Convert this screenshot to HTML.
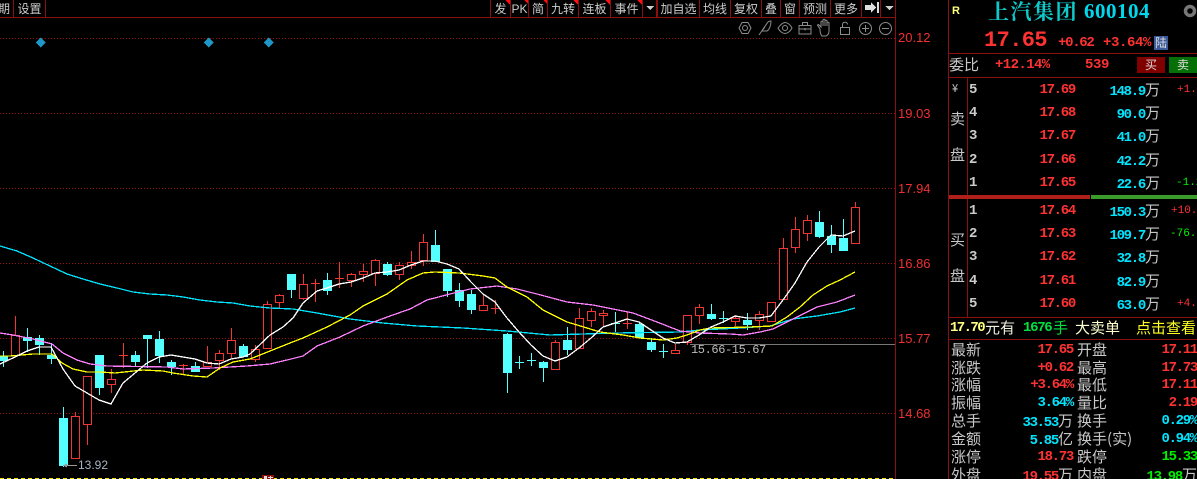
<!DOCTYPE html>
<html><head><meta charset="utf-8"><style>
html,body{margin:0;padding:0;background:#000;width:1197px;height:479px;overflow:hidden}
#r{position:relative;width:1197px;height:479px;overflow:hidden;background:#000;font-family:"Liberation Sans","WenQuanYi Zen Hei","Noto Sans CJK SC",sans-serif}
#r svg{position:absolute;left:0;top:0}
.t{position:absolute;white-space:nowrap;line-height:16px;height:16px}
.b{position:absolute;background:#8a0f0f}
.tb{font-size:12px;color:#ccc;top:1px;font-family:"WenQuanYi Zen Hei","Noto Sans CJK SC",sans-serif;text-align:center}
.p{font-size:13px;color:#f03030;left:898px}
.n{font-family:"Liberation Mono",monospace;font-weight:bold;font-size:14px;letter-spacing:-1.3px;text-align:right}
.rd{color:#ff3232}.cy{color:#00e5ff}.gr{color:#00f000}
.l{font-family:"WenQuanYi Zen Hei","Noto Sans CJK SC",sans-serif;font-size:15px;color:#c8c8c8}
.pr{right:122px}.v1{right:124px}.v2{right:0}
.d{font-family:"Liberation Mono",monospace;font-size:11px}
.wn{letter-spacing:0;font-weight:normal}
</style></head><body><div id="r">
<svg width="1197" height="479" viewBox="0 0 1197 479">
<g shape-rendering="crispEdges">
<path d="M0 38.5H895M0 113.5H895M0 188.5H895M0 263.5H895M0 338.5H895M0 413.5H895" stroke="#9a1010" stroke-dasharray="1 2" fill="none"/>
<path d="M690 344.5H895" stroke="#777" fill="none"/>
<path d="M0 478.5H895" stroke="#f0e000" stroke-dasharray="4 3" fill="none"/>
<path d="M3.5 351V367M27.5 328V352M39.5 335V355M51.5 343V364M63.5 407V467M99.5 355V395M135.5 351V366M147.5 335V368M159.5 331V363M171.5 360V375M195.5 362V372M243.5 344V357M291.5 274V298M327.5 273V295M387.5 262V276M435.5 230V262M447.5 269V297M459.5 283V307M471.5 290V314M507.5 333V393M519.5 356V369M531.5 353V366M543.5 361V382M567.5 327V355M615.5 312V332M639.5 322V338M651.5 338V352M663.5 344V358M711.5 304V320M723.5 311V323M747.5 313V330M819.5 211V238M831.5 225V253M843.5 219V250M515 362.5H524M527 360.5H536M611 323.5H620M659 351.5H668M719 318.5H728" stroke="#54ffff" fill="none"/>
<path d="M-1 356h9v5h-9zM23 337h9v4h-9zM35 338h9v7h-9zM47 355h9v4h-9zM59 418h9v48h-9zM95 355h9v33h-9zM131 355h9v7h-9zM143 335h9v4h-9zM155 339h9v17h-9zM167 362h9v5h-9zM191 366h9v6h-9zM239 346h9v11h-9zM287 274h9v16h-9zM323 280h9v11h-9zM383 264h9v11h-9zM431 245h9v17h-9zM443 269h9v22h-9zM455 290h9v11h-9zM467 294h9v16h-9zM503 334h9v39h-9zM539 362h9v6h-9zM563 340h9v10h-9zM635 324h9v14h-9zM647 342h9v8h-9zM707 314h9v5h-9zM743 320h9v5h-9zM815 222h9v15h-9zM827 236h9v9h-9zM839 238h9v13h-9z" fill="#54ffff"/>
<path d="M15.5 316V355M75.5 412V458M87.5 376V445M111.5 369V393M123.5 343V368M183.5 364V375M207.5 346V367M219.5 350V370M231.5 328V358M255.5 345V362M267.5 301V349M279.5 294V308M303.5 274V300M315.5 279V302M339.5 262V288M351.5 273V287M363.5 264V282M375.5 259V286M399.5 262V280M411.5 251V269M423.5 234V266M483.5 295V310M495.5 300V314M555.5 340V369M579.5 308V348M591.5 308V327M603.5 310V327M627.5 312V329M675.5 344V354M687.5 315V345M699.5 304V324M735.5 315V326M759.5 311V330M771.5 302V321M783.5 238V300M795.5 217V253M807.5 215V241M855.5 202V243M119 355.5H128M179 365.5H188M311 283.5H320M335 278.5H344M491 308.5H500M623 323.5H632" stroke="#f03535" fill="none"/>
<path d="M11.5 335.5h8v20h-8zM71.5 416.5h8v42h-8zM83.5 376.5h8v48h-8zM107.5 379.5h8v5h-8zM203.5 362.5h8v4h-8zM215.5 353.5h8v7h-8zM227.5 340.5h8v13h-8zM251.5 349.5h8v10h-8zM263.5 304.5h8v44h-8zM275.5 295.5h8v7h-8zM299.5 284.5h8v14h-8zM347.5 274.5h8v6h-8zM359.5 271.5h8v3h-8zM371.5 260.5h8v13h-8zM395.5 265.5h8v9h-8zM407.5 262.5h8v3h-8zM419.5 242.5h8v18h-8zM479.5 305.5h8v5h-8zM551.5 342.5h8v27h-8zM575.5 318.5h8v30h-8zM587.5 311.5h8v9h-8zM599.5 313.5h8v2h-8zM671.5 350.5h8v3h-8zM683.5 315.5h8v27h-8zM695.5 307.5h8v8h-8zM731.5 318.5h8v3h-8zM755.5 314.5h8v6h-8zM767.5 302.5h8v19h-8zM779.5 248.5h8v51h-8zM791.5 229.5h8v18h-8zM803.5 220.5h8v13h-8zM851.5 207.5h8v36h-8z" fill="#000" stroke="#f03535"/>
<polyline fill="none" stroke="#00e5ff" stroke-width="1.3" points="0,246 10,249 17,251 33,258 50,266 67,274 83,279 100,284 117,288 133,292 150,294 167,295 183,297 200,300 217,302 233,303 250,306 270,308 293,309 317,313 350,319 383,323 417,326 463,328 507,331 550,335 583,334 617,333 680,332 700,330 740,328 770,326 793,319 817,316 840,312 855,308"/>
<polyline fill="none" stroke="#ff80ff" stroke-width="1.3" points="0,333 13,335 33,339 52,344 63,353 77,360 90,364 107,366 167,367 183,369 213,368 247,366 270,364 287,360 303,356 317,346 340,337 363,326 390,316 410,309 427,300 450,294 470,289 497,286 517,289 537,294 567,302 593,305 633,313 657,322 680,331 700,333 730,334 743,335 760,332 773,329 797,317 817,307 837,302 855,295"/>
<polyline fill="none" stroke="#ffff00" stroke-width="1.3" points="0,356 10,356 33,354 52,354 62,363 73,369 87,372 100,372 115,373 143,370 163,371 173,373 193,376 207,377 220,368 233,362 250,359 270,351 290,343 303,338 327,327 350,315 363,306 387,294 407,280 423,273 435,272 459,273 483,276 495,278 507,287 527,297 543,310 567,322 587,328 600,332 623,335 640,338 663,340 677,338 687,335 700,330 710,328 750,327 772,326 787,317 800,307 813,295 827,286 840,280 855,272"/>
<polyline fill="none" stroke="#ffffff" stroke-width="1.3" points="0,364 15,357 27,351 39,347 51,347 63,369 75,386 87,393 99,400 111,404 123,383 135,373 147,363 159,357 171,355 183,357 195,359 207,363 219,364 231,359 243,357 250,354 270,335 283,327 293,318 303,303 317,291 327,288 339,284 351,282 363,278 375,273 387,272 399,270 411,265 423,261 435,261 447,264 459,269 471,282 483,294 495,302 507,318 519,332 531,345 543,356 555,361 567,357 579,348 591,338 603,327 615,323 627,319 639,322 651,330 663,338 675,343 687,342 699,335 711,327 723,322 735,316 747,318 759,318 771,316 783,300 795,283 807,262 819,247 831,235 843,236 855,231"/>
<path d="M40.5 37.5l5 5-5 5-5-5zM208.5 37.5l5 5-5 5-5-5zM268.5 37.5l5 5-5 5-5-5z" fill="#1e96c8"/>
<path d="M262 475h12v4h-12z" fill="#8a0f0f"/>
<path d="M264 476h3v3h-3zM270 476h1v3h-1zM268 477h5v1h-5z" fill="#ddd"/>
</g>
<g fill="none" stroke="#8c8c8c" stroke-width="1">
<path d="M742 22.500l6 0 3 5.500-3 5.500-6 0-3-5.500z" stroke-linejoin="round"/><circle cx="745" cy="28" r="2.500"/>
<path d="M759 35l9-13c1-1 2-1 3-1 0 5-2 9-4 10l-5 0M762 31l3-4" />
<path d="M778 28c3-4 5-5.500 7-5.500s5 1.500 7 5.500c-2 4-5 5.500-7 5.500s-5-1.500-7-5.500z"/><circle cx="785" cy="28" r="2.500"/>
<path d="M799 25.500h12v8.500h-12zM802.500 25.500v-3h5v3M799 29h12M805 28v2.500"/>
<path d="M820 29l-2-3c-1-1 0-2 1-1l2 2v-5c0-1 2-1 2 0v4-6c0-1 2-1 2 0v6-5c0-1 2-1 2 0v5-3c0-1 2-1 2 0v8c0 2-1 4-3 5h-4c-1-1-2-3-2-7z"/>
<path d="M840.500 27.500h9v7h-9zM842.500 27.500v-3c0-3 5-3 5 0"/>
<circle cx="865.500" cy="28.500" r="6"/><path d="M862 28.500h7M865.500 25v7"/>
<circle cx="885.500" cy="28.500" r="6"/><path d="M882 28.500h7"/>
</g>
</svg>

<div class="b" style="left:0;top:17px;width:895px;height:1px"></div>
<div class="b" style="left:13px;top:0;width:1px;height:17px"></div>
<div class="b" style="left:45px;top:0;width:1px;height:17px"></div>
<div class="b" style="left:490px;top:0;width:1px;height:17px"></div>
<div class="b" style="left:510px;top:0;width:1px;height:17px"></div>
<div class="b" style="left:528px;top:0;width:1px;height:17px"></div>
<div class="b" style="left:547px;top:0;width:1px;height:17px"></div>
<div class="b" style="left:578px;top:0;width:1px;height:17px"></div>
<div class="b" style="left:610px;top:0;width:1px;height:17px"></div>
<div class="b" style="left:642px;top:0;width:1px;height:17px"></div>
<div class="b" style="left:656px;top:0;width:2px;height:17px"></div>
<div class="b" style="left:699px;top:0;width:1px;height:17px"></div>
<div class="b" style="left:730px;top:0;width:1px;height:17px"></div>
<div class="b" style="left:761px;top:0;width:1px;height:17px"></div>
<div class="b" style="left:780px;top:0;width:1px;height:17px"></div>
<div class="b" style="left:799px;top:0;width:1px;height:17px"></div>
<div class="b" style="left:830px;top:0;width:1px;height:17px"></div>
<div class="b" style="left:861px;top:0;width:1px;height:17px"></div>
<div class="b" style="left:880px;top:0;width:1px;height:17px"></div>
<div class="b" style="left:895px;top:0;width:1px;height:479px"></div>

<div class="t tb" style="left:-4px;width:16px">期</div>
<div class="t tb" style="left:14px;width:31px">设置</div>
<div class="t tb" style="left:491px;width:19px">发</div>
<div class="t tb" style="left:511px;width:17px;font-family:'Liberation Sans',sans-serif">PK</div>
<div class="t tb" style="left:529px;width:18px">简</div>
<div class="t tb" style="left:548px;width:30px">九转</div>
<div class="t tb" style="left:579px;width:31px">连板</div>
<div class="t tb" style="left:611px;width:31px">事件</div>
<div class="t tb" style="left:658px;width:41px">加自选</div>
<div class="t tb" style="left:700px;width:30px">均线</div>
<div class="t tb" style="left:731px;width:30px">复权</div>
<div class="t tb" style="left:762px;width:18px">叠</div>
<div class="t tb" style="left:781px;width:18px">窗</div>
<div class="t tb" style="left:800px;width:30px">预测</div>
<div class="t tb" style="left:831px;width:30px">更多</div>
<svg width="1197" height="18" viewBox="0 0 1197 18" shape-rendering="crispEdges">
<path d="M505 0h5v5zM524 0h4v4zM543 0h4v4zM573 0h5v5zM605 0h5v5zM637 0h5v5z" fill="#ff1010"/>
<path d="M646 6h8l-4 4zM885 6h9l-4.500 4z" fill="#ccc"/>
<path d="M865 5h6V2l5 5.500-5 5.500v-3h-6zM877 2h2v11h-2z" fill="#ddd"/>
</svg>

<div class="t p" style="top:30px">20.12</div>
<div class="t p" style="top:106px">19.03</div>
<div class="t p" style="top:181px">17.94</div>
<div class="t p" style="top:256px">16.86</div>
<div class="t p" style="top:331px">15.77</div>
<div class="t p" style="top:406px">14.68</div>
<div class="t" style="left:78px;top:457px;font-size:12px;color:#a9b4c4">13.92</div>
<div class="t" style="left:691px;top:342px;font-size:12px;color:#bbb;font-family:'Liberation Mono',monospace;letter-spacing:-.4px">15.66-15.67</div>
<svg width="100" height="479" viewBox="0 0 100 479"><path d="M63 465.500h14" stroke="#999" fill="none"/><path d="M63 465.500l4-2v4z" fill="#999"/></svg>

<div class="b" style="left:948px;top:0;width:1px;height:479px"></div>
<div class="b" style="left:949px;top:53px;width:248px;height:1px"></div>
<div class="b" style="left:949px;top:77px;width:248px;height:1px"></div>
<div class="b" style="left:967px;top:77px;width:1px;height:240px"></div>
<div class="b" style="left:949px;top:317px;width:248px;height:1px"></div>
<div class="b" style="left:949px;top:339px;width:248px;height:1px"></div>
<div class="b" style="left:949px;top:195px;width:141px;height:4px;background:#b0201a"></div>
<div class="b" style="left:1091px;top:195px;width:106px;height:4px;background:#3a9a2a"></div>

<div class="t" style="left:952px;top:3px;font-size:11px;font-weight:bold;color:#ffff80">R</div>
<div class="t" style="left:988px;top:0;height:22px;line-height:22px;font-size:21px;letter-spacing:1.5px;font-weight:bold;color:#10c8c8;font-family:'Noto Serif CJK SC',serif">上汽集团</div>
<div class="t" style="left:1084px;top:1px;height:20px;line-height:20px;font-size:21px;font-weight:bold;color:#00d8ee;font-family:'Liberation Serif',serif;letter-spacing:.5px">600104</div>
<svg width="1197" height="30" viewBox="0 0 1197 30"><circle cx="1190" cy="11" r="4.500" fill="none" stroke="#777" stroke-width="3.500"/></svg>
<div class="t rd" style="left:984px;top:29px;height:24px;line-height:24px;font-size:22px;font-family:'Liberation Mono',monospace;letter-spacing:-.6px;font-weight:bold">17.65</div>
<div class="t n rd" style="left:1058px;top:35px">+0.62</div>
<div class="t n rd" style="left:1103px;top:35px;letter-spacing:-.4px">+3.64%</div>
<div class="t" style="left:1154px;top:36px;width:14px;height:14px;line-height:14px;background:#3a5a9a;color:#ddd;font-size:12px;text-align:center;font-family:'WenQuanYi Zen Hei',sans-serif">陆</div>

<div class="t l" style="left:949px;top:57px">委比</div>
<div class="t n rd" style="left:995px;top:57px;letter-spacing:-.6px">+12.14%</div>
<div class="t n rd" style="left:1085px;top:57px;letter-spacing:-.4px">539</div>
<div class="t" style="left:1137px;top:57px;width:28px;line-height:16px;background:#800000;color:#ddd;font-size:12px;text-align:center;font-family:'WenQuanYi Zen Hei',sans-serif">买</div>
<div class="t" style="left:1169px;top:57px;width:28px;line-height:16px;background:#076f07;color:#ddd;font-size:12px;text-align:center;font-family:'WenQuanYi Zen Hei',sans-serif">卖</div>

<div class="t l" style="left:952px;top:80px;font-size:11px">¥</div>
<div class="t l" style="left:950px;top:111px">卖</div>
<div class="t l" style="left:950px;top:147px">盘</div>
<div class="t l" style="left:950px;top:232px">买</div>
<div class="t l" style="left:950px;top:268px">盘</div>

<div class="t n" style="left:969px;top:82px;color:#ccc">5</div>
<div class="t n" style="left:969px;top:105px;color:#ccc">4</div>
<div class="t n" style="left:969px;top:128px;color:#ccc">3</div>
<div class="t n" style="left:969px;top:152px;color:#ccc">2</div>
<div class="t n" style="left:969px;top:175px;color:#ccc">1</div>
<div class="t n" style="left:969px;top:203px;color:#ccc">1</div>
<div class="t n" style="left:969px;top:226px;color:#ccc">2</div>
<div class="t n" style="left:969px;top:249px;color:#ccc">3</div>
<div class="t n" style="left:969px;top:273px;color:#ccc">4</div>
<div class="t n" style="left:969px;top:296px;color:#ccc">5</div>

<div class="t n rd pr" style="top:82px">17.69</div>
<div class="t n rd pr" style="top:105px">17.68</div>
<div class="t n rd pr" style="top:128px">17.67</div>
<div class="t n rd pr" style="top:152px">17.66</div>
<div class="t n rd pr" style="top:175px">17.65</div>
<div class="t n rd pr" style="top:203px">17.64</div>
<div class="t n rd pr" style="top:226px">17.63</div>
<div class="t n rd pr" style="top:249px">17.62</div>
<div class="t n rd pr" style="top:273px">17.61</div>
<div class="t n rd pr" style="top:296px">17.60</div>

<div class="t n cy" style="right:37px;top:82px">148.9<span class="l cy wn">万</span></div>
<div class="t n cy" style="right:37px;top:105px">90.0<span class="l cy wn">万</span></div>
<div class="t n cy" style="right:37px;top:128px">41.0<span class="l cy wn">万</span></div>
<div class="t n cy" style="right:37px;top:152px">42.2<span class="l cy wn">万</span></div>
<div class="t n cy" style="right:37px;top:175px">22.6<span class="l cy wn">万</span></div>
<div class="t n cy" style="right:37px;top:203px">150.3<span class="l cy wn">万</span></div>
<div class="t n cy" style="right:37px;top:226px">109.7<span class="l cy wn">万</span></div>
<div class="t n cy" style="right:37px;top:249px">32.8<span class="l cy wn">万</span></div>
<div class="t n cy" style="right:37px;top:273px">82.9<span class="l cy wn">万</span></div>
<div class="t n cy" style="right:37px;top:296px">63.0<span class="l cy wn">万</span></div>

<div class="t d rd" style="left:1177px;top:82px">+1.8</div>
<div class="t d gr" style="left:1176px;top:175px">-1.2</div>
<div class="t d rd" style="left:1171px;top:203px">+10.4</div>
<div class="t d gr" style="left:1170px;top:226px">-76.0</div>
<div class="t d rd" style="left:1177px;top:296px">+4.4</div>

<div class="t n" style="left:950px;top:320px;color:#ffff80;letter-spacing:-1.6px">17.70</div>
<div class="t l" style="left:985px;top:320px;color:#f0f0e0">元有</div>
<div class="t n" style="left:1023px;top:320px;color:#00e040">1676</div>
<div class="t l" style="left:1053px;top:320px;color:#00e040">手</div>
<div class="t l" style="left:1075px;top:320px;color:#ffffd0">大卖单</div>
<div class="t l" style="left:1136px;top:320px;color:#ffff20">点击查看</div>

<div class="t l" style="left:951px;top:342px">最新</div><div class="t n rd v1" style="top:342px">17.65</div><div class="t l" style="left:1077px;top:342px">开盘</div><div class="t n rd v2" style="top:342px">17.11</div>
<div class="t l" style="left:951px;top:360px">涨跌</div><div class="t n rd v1" style="top:360px">+0.62</div><div class="t l" style="left:1077px;top:360px">最高</div><div class="t n rd v2" style="top:360px">17.73</div>
<div class="t l" style="left:951px;top:377px">涨幅</div><div class="t n rd v1" style="top:377px">+3.64%</div><div class="t l" style="left:1077px;top:377px">最低</div><div class="t n rd v2" style="top:377px">17.11</div>
<div class="t l" style="left:951px;top:395px">振幅</div><div class="t n cy v1" style="top:395px">3.64%</div><div class="t l" style="left:1077px;top:395px">量比</div><div class="t n rd v2" style="top:395px">2.19</div>
<div class="t l" style="left:951px;top:413px">总手</div><div class="t n cy v1" style="top:413px">33.53<span class="l cy wn">万</span></div><div class="t l" style="left:1077px;top:413px">换手</div><div class="t n cy v2" style="top:413px">0.29%</div>
<div class="t l" style="left:951px;top:431px">金额</div><div class="t n cy v1" style="top:431px">5.85<span class="l cy wn">亿</span></div><div class="t l" style="left:1077px;top:431px">换手(实)</div><div class="t n cy v2" style="top:431px">0.94%</div>
<div class="t l" style="left:951px;top:449px">涨停</div><div class="t n rd v1" style="top:449px">18.73</div><div class="t l" style="left:1077px;top:449px">跌停</div><div class="t n gr v2" style="top:449px">15.33</div>
<div class="t l" style="left:951px;top:467px">外盘</div><div class="t n rd v1" style="top:467px">19.55<span class="l rd wn">万</span></div><div class="t l" style="left:1077px;top:467px">内盘</div><div class="t n gr v2" style="top:467px">13.98<span class="l gr wn">万</span></div>
</div></body></html>
